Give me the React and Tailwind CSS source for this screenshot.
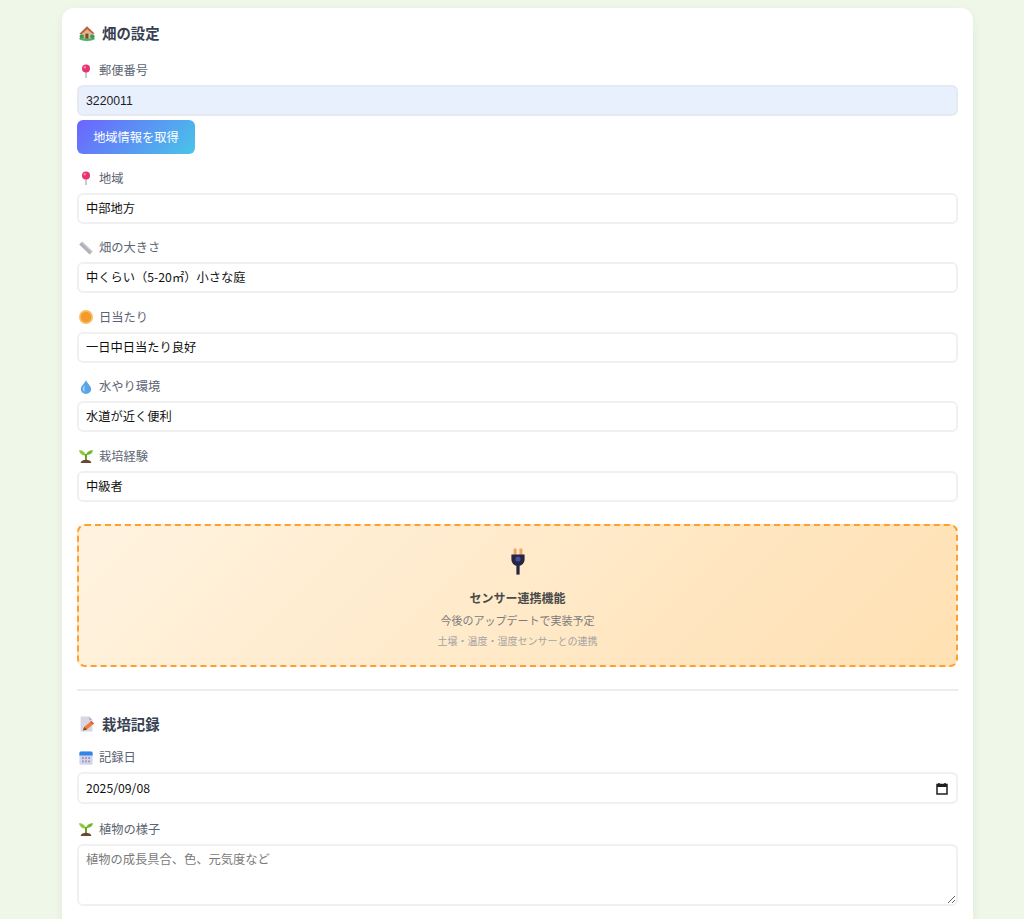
const Pin = () => (
    <svg width="14" height="14" viewBox="0 0 14 14" className="shrink-0">
        <rect x="6.4" y="6" width="1.2" height="8" fill="#a8a8b0" />
        <circle cx="7" cy="4.4" r="4" fill="#e8336d" />
        <circle cx="5.8" cy="3.2" r="1.2" fill="#f58aa8" />
    </svg>
)

const Ruler = () => (
    <svg width="14" height="14" viewBox="0 0 14 14" className="shrink-0">
        <path d="M3.2 0.4 L13.6 10.4 L10.6 13.6 L0.2 3.6 Z" fill="#b4b0bc" />
        <path d="M3.2 0.4 L13.6 10.4 L12.8 11.2 L2.4 1.2 Z" fill="#d0cdd6" />
    </svg>
)

const Sun = () => (
    <svg width="14" height="14" viewBox="0 0 14 14" className="shrink-0">
        <circle cx="7" cy="7" r="7" fill="#f9bd5c" />
        <circle cx="7" cy="7" r="5.2" fill="#f29a2e" />
    </svg>
)

const Drop = () => (
    <svg width="14" height="14" viewBox="0 0 14 14" className="shrink-0">
        <path d="M7 0.2 C8.5 3.4 12.2 6 12.2 9 A5.2 5 0 0 1 1.8 9 C1.8 6 5.5 3.4 7 0.2 Z" fill="#5aa5e8" />
        <path d="M3.6 9 C3.6 7.6 4.8 6.2 5.8 5 C5.6 7 5.2 8.6 5.8 11.6 C4.4 11.2 3.6 10 3.6 9 Z" fill="#a8d4f5" />
    </svg>
)

const Sprout = () => (
    <svg width="14" height="14" viewBox="0 0 14 14" className="shrink-0">
        <path d="M7 6.4 C5.8 2.4 3 1 0 1.2 C0.6 4.8 3.4 7 7 6.4 Z" fill="#8fcb3c" />
        <path d="M7 5.8 C8 2.6 10.6 1 14 1.2 C13.4 4.4 10.6 6.4 7 5.8 Z" fill="#70b82c" />
        <rect x="6" y="5" width="2" height="6" fill="#6a9e2e" />
        <path d="M1.6 14 C2.2 9.8 11.8 9.8 12.4 14 Z" fill="#6b4630" />
    </svg>
)

const Calendar = () => (
    <svg width="14" height="14" viewBox="0 0 14 14" className="shrink-0">
        <rect x="0.4" y="0.6" width="13.2" height="13.2" rx="1.5" fill="#d6d4ec" />
        <path d="M0.4 4.4 V2.1 A1.5 1.5 0 0 1 1.9 0.6 H12.1 A1.5 1.5 0 0 1 13.6 2.1 V4.4 Z" fill="#2f86e8" />
        <g fill="#9c9abc">
            <rect x="3" y="6" width="1.8" height="2" /><rect x="6.1" y="6" width="1.8" height="2" /><rect x="9.2" y="6" width="1.8" height="2" />
            <rect x="3" y="9.4" width="1.8" height="2" /><rect x="6.1" y="9.4" width="1.8" height="2" /><rect x="9.2" y="9.4" width="1.8" height="2" />
        </g>
    </svg>
)

const House = () => (
    <svg width="16" height="16" viewBox="0 0 16 16" className="shrink-0">
        <ellipse cx="8" cy="13.8" rx="7.8" ry="2.1" fill="#4fb06a" />
        <path d="M3.6 8 L8.4 3.6 L12.8 8 V13.6 H3.6 Z" fill="#dcb88e" />
        <path d="M0.4 8.8 L8 1.2 L15.6 8.6 L13.6 9 L8.2 4.2 L2.4 9.6 Z" fill="#c0603c" />
        <rect x="6.4" y="8.6" width="3" height="5" fill="#7a4a30" />
        <circle cx="2.8" cy="11.4" r="2.2" fill="#3d9a58" />
        <circle cx="13.4" cy="11.4" r="2.2" fill="#3d9a58" />
    </svg>
)

const Memo = () => (
    <svg width="16" height="16" viewBox="0 0 16 16" className="shrink-0">
        <path d="M1.6 0.6 H10 L13.4 4 V15.4 H1.6 Z" fill="#d8d6e4" />
        <path d="M10 0.6 L13.4 4 H10 Z" fill="#b6b4c6" />
        <path d="M4 14.6 L5.2 11 L12.2 5 L15 7.4 L8 13.4 Z" fill="#f08030" />
        <path d="M12.2 5 L15 7.4 L14 8.4 L11.2 6 Z" fill="#e84a5a" />
        <path d="M4 14.6 L5.2 11 L8 13.4 Z" fill="#7a4a30" />
    </svg>
)

const Plug = () => (
    <svg width="16" height="28" viewBox="0 0 16 28" className="shrink-0">
        <rect x="3.6" y="0.6" width="3" height="7" fill="#e8a868" />
        <rect x="9.4" y="0.6" width="3" height="7" fill="#e8a868" />
        <path d="M1.4 6.4 H14.6 V11 C14.6 15 12 18 8 18 C4 18 1.4 15 1.4 11 Z" fill="#25263f" />
        <circle cx="8" cy="11" r="2.6" fill="#4a4aa0" />
        <rect x="6.4" y="17" width="3.2" height="9.6" fill="#25263f" />
    </svg>
)

const Label = ({ icon, text }) => (
    <div className="flex items-center gap-[6px] h-[18px] mb-[5.5px] pl-[2px] text-[12.25px] text-[#5b6472]">
        {icon}
        <span>{text}</span>
    </div>
)

const Field = ({ icon, label, value }) => (
    <div className="mb-[15px]">
        <Label icon={icon} text={label} />
        <div className="flex items-center h-[31px] px-[7px] bg-white border-2 border-[#f0f0f0] rounded-[6px] text-[12.25px] text-[#111111]">{value}</div>
    </div>
)

const App = () => {
    return (
        <div className="h-[919px] overflow-hidden bg-[#eff7e8] pt-2 font-['Noto_Sans_CJK_JP',sans-serif]">
            <div className="ml-[62px] w-[911px] h-[1000px] bg-white rounded-xl shadow-[0_4px_12px_rgba(0,0,0,0.06)] px-[15px] pt-[15px]">

                <h2 className="flex items-center gap-[7px] h-5 mb-[18.5px] pl-[2px] text-[14.4px] font-bold text-[#374151]">
                    <House /> 畑の設定
                </h2>

                <div className="mb-[15px]">
                    <Label icon={<Pin />} text="郵便番号" />
                    <input readOnly value="3220011" className="block w-full h-[31px] px-[7px] bg-[#e8f0fe] border-2 border-[#e6e9f0] rounded-[6px] text-[12.25px] text-[#1f1f1f] font-['Liberation_Sans',sans-serif] outline-none" />
                    <button className="block mt-[4px] w-[118px] h-[34px] rounded-[6px] bg-[linear-gradient(135deg,#6c63ff_0%,#48c6e8_100%)] text-white text-[12.25px]">地域情報を取得</button>
                </div>

                <Field icon={<Pin />} label="地域" value="中部地方" />
                <Field icon={<Ruler />} label="畑の大きさ" value="中くらい（5-20㎡）小さな庭" />
                <Field icon={<Sun />} label="日当たり" value="一日中日当たり良好" />
                <Field icon={<Drop />} label="水やり環境" value="水道が近く便利" />
                <Field icon={<Sprout />} label="栽培経験" value="中級者" />

                <div className="flex flex-col items-center h-[143px] mt-[22px] pt-[22px] border-2 border-dashed border-[#ff9f2e] rounded-lg bg-[linear-gradient(135deg,#fff3e0_0%,#ffe0b2_100%)]">
                    <Plug />
                    <p className="mt-[13px] text-[12px] font-bold text-[#4a4a4a]">センサー連携機能</p>
                    <p className="mt-[5px] text-[11px] text-[#7c7c7c]">今後のアップデートで実装予定</p>
                    <p className="mt-[5px] text-[10px] text-[#a3a3a3]">土壌・温度・湿度センサーとの連携</p>
                </div>

                <hr className="mt-[22px] mb-[23px] border-t-2 border-[#ececec]" />

                <h2 className="flex items-center gap-[7px] h-5 mb-[15px] pl-[2px] text-[14.4px] font-bold text-[#374151]">
                    <Memo /> 栽培記録
                </h2>

                <div className="mb-[16px]">
                    <Label icon={<Calendar />} text="記録日" />
                    <div className="flex items-center justify-between h-[32px] mt-[1.5px] pl-[7px] pr-[8px] border-2 border-[#f0f0f0] rounded-[6px] text-[12.25px] text-[#111111]">
                        <span>2025/09/08</span>
                        <svg width="12" height="13" viewBox="0 0 12 13">
                            <path d="M1 2.5 H11 V12 H1 Z" fill="none" stroke="#1f1f1f" strokeWidth="1.5" />
                            <path d="M1 4 H11" stroke="#1f1f1f" strokeWidth="2" />
                            <path d="M3 1 V3 M9 1 V3" stroke="#1f1f1f" strokeWidth="1.5" />
                        </svg>
                    </div>
                </div>

                <div>
                    <Label icon={<Sprout />} text="植物の様子" />
                    <textarea placeholder="植物の成長具合、色、元気度など" className="block w-full h-[62px] px-[7px] py-[4px] border-2 border-[#f0f0f0] rounded-[6px] text-[12.25px] outline-none placeholder:text-[#7a7a7a]" />
                </div>

            </div>
        </div>
    )
}

export default App
